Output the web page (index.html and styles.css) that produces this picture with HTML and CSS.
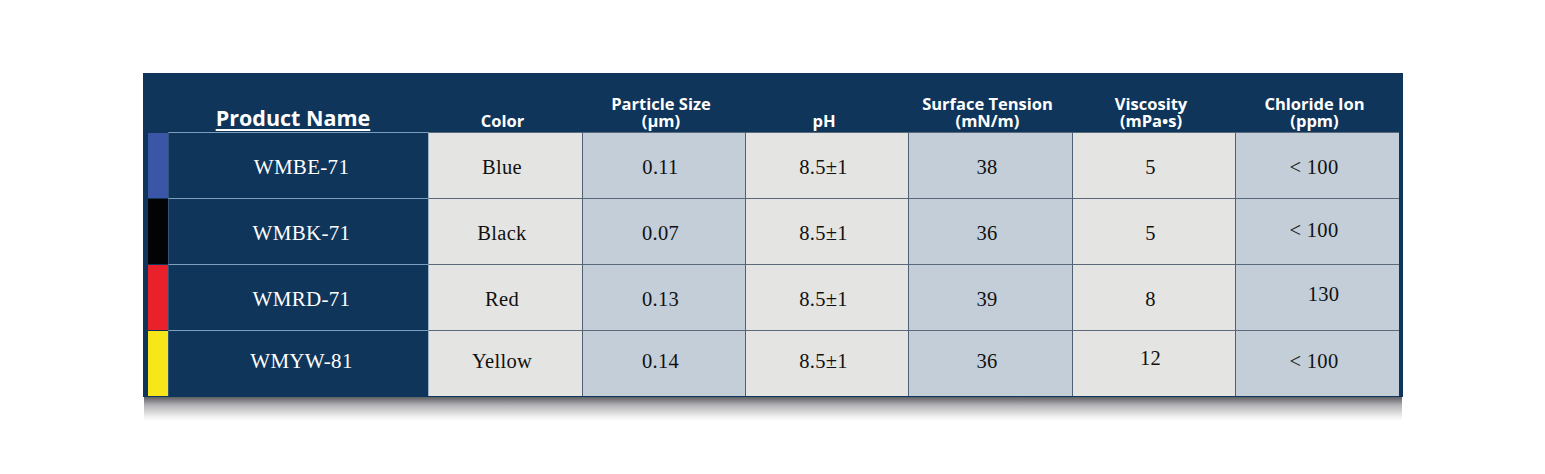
FILE: index.html
```html
<!DOCTYPE html>
<html lang="en">
<head>
<meta charset="utf-8">
<title>Product specifications</title>
<link rel="stylesheet" href="styles.css">
</head>
<body>
<div class="page">
  <div class="sheet">
    <div class="table">
      <div class="hrow">
        <div class="hcell hname"><span>Product Name</span></div>
        <div class="hcell">Color</div>
        <div class="hcell">Particle Size<br>(µm)</div>
        <div class="hcell">pH</div>
        <div class="hcell">Surface Tension<br>(mN/m)</div>
        <div class="hcell">Viscosity<br>(mPa•s)</div>
        <div class="hcell">Chloride Ion<br>(ppm)</div>
      </div>
      <div class="row">
        <div class="strip blue"></div>
        <div class="cell name">WMBE-71</div>
        <div class="cell light">Blue</div>
        <div class="cell tint">0.11</div>
        <div class="cell light">8.5±1</div>
        <div class="cell tint">38</div>
        <div class="cell light">5</div>
        <div class="cell tint">&lt; 100</div>
      </div>
      <div class="row">
        <div class="strip black"></div>
        <div class="cell name">WMBK-71</div>
        <div class="cell light">Black</div>
        <div class="cell tint">0.07</div>
        <div class="cell light">8.5±1</div>
        <div class="cell tint">36</div>
        <div class="cell light">5</div>
        <div class="cell tint up">&lt; 100</div>
      </div>
      <div class="row">
        <div class="strip red"></div>
        <div class="cell name">WMRD-71</div>
        <div class="cell light">Red</div>
        <div class="cell tint">0.13</div>
        <div class="cell light">8.5±1</div>
        <div class="cell tint">39</div>
        <div class="cell light">8</div>
        <div class="cell tint shift">130</div>
      </div>
      <div class="row last">
        <div class="strip yellow"></div>
        <div class="cell name">WMYW-81</div>
        <div class="cell light">Yellow</div>
        <div class="cell tint">0.14</div>
        <div class="cell light">8.5±1</div>
        <div class="cell tint">36</div>
        <div class="cell light up2">12</div>
        <div class="cell tint">&lt; 100</div>
      </div>
    </div>
    <div class="shadow"></div>
  </div>
</div>
</body>
</html>
```

FILE: styles.css
```css
* { box-sizing: border-box; }
html, body { margin: 0; padding: 0; background: #ffffff; }
.page {
  padding: 73px 0 0 143px;
  width: 1545px;
  height: 474px;
}
.sheet { width: 1260px; }
.table {
  background: #0f355a;
  padding: 0 4px 1px 5px;
}
.hrow, .row {
  display: grid;
  grid-template-columns: 280px 154px 163px 163px 164px 163px 164px;
}
.row {
  grid-template-columns: 20px 260px 154px 163px 163px 164px 163px 164px;
  height: 66px;
}
.hrow {
  height: 59px;
}
.hcell {
  display: flex;
  flex-direction: column;
  justify-content: flex-end;
  align-items: center;
  text-align: center;
  color: #ffffff;
  font-family: "Open Sans", "Liberation Sans", sans-serif;
  font-weight: 700;
  font-size: 16.5px;
  line-height: 17px;
  padding-bottom: 3px;
  padding-right: 5px;
}
.hname {
  padding-left: 10px;
  padding-right: 0;
  padding-bottom: 1px;
}
.hname span {
  font-size: 21.5px;
  line-height: 27px;
  text-decoration: underline;
  text-decoration-thickness: 2px;
  text-underline-offset: 3px;
}
.strip {
  border-top: 1px solid #0f355a;
}
.strip.blue { background: #3b56a6; }
.strip.black { background: #020304; }
.strip.red { background: #e8212a; }
.strip.yellow { background: #f6e61a; }
.cell {
  display: flex;
  align-items: center;
  justify-content: center;
  font-family: "Liberation Serif", "Times New Roman", serif;
  font-size: 20.5px;
  letter-spacing: 0.3px;
  color: #111111;
  border-top: 1px solid #5a6a7a;
  border-left: 1px solid #4f6072;
  padding-top: 3px;
  padding-right: 7px;
}
.cell.name {
  color: #ffffff;
  font-size: 21px;
  border-top: 1px solid #7f9dbd;
  border-left: 1px solid #2f5478;
  letter-spacing: 0.3px;
  padding-right: 0;
  padding-left: 6px;
}
.cell.light {
  background: #e4e4e3;
}
.cell.name + .cell.light {
  border-left: 1px solid #9fb4c9;
}
.cell.tint {
  background: #c3ced8;
}
.cell.up { padding-top: 0; padding-bottom: 2px; }
.cell.shift { padding-left: 12px; padding-right: 0; padding-top: 0; padding-bottom: 6px; }
.row.last .cell { padding-top: 0; padding-bottom: 5px; }
.row.last .cell.up2 { padding-bottom: 11px; }
.shadow {
  height: 24px;
  margin: 0 1px;
  background: linear-gradient(#5f6064, #b5b5b8 35%, #f4f4f4 85%, #ffffff);
}
```
